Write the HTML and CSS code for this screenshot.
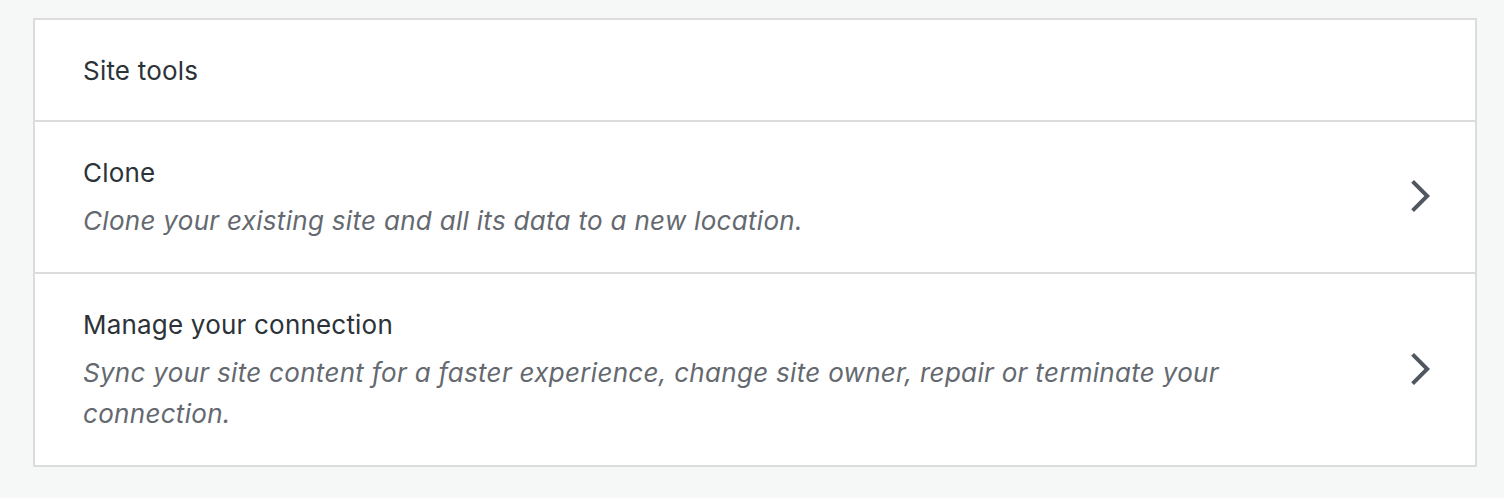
FILE: index.html
```html
<!DOCTYPE html>
<html lang="en">
<head>
<meta charset="utf-8">
<title>Site tools</title>
<link rel="stylesheet" href="styles.css">
</head>
<body>
<div class="page">
  <section class="card">
    <header class="card-header">Site tools</header>
    <a class="tool" href="#">
      <div class="tool-text">
        <div class="tool-title">Clone</div>
        <div class="tool-desc">Clone your existing site and all its data to a new location.</div>
      </div>
      <svg class="chevron" viewBox="0 0 24 24" width="48" height="48" aria-hidden="true"><path d="M10 20l8-8-8-8-1.414 1.414L15.172 12l-6.586 6.586z"/></svg>
    </a>
    <a class="tool" href="#">
      <div class="tool-text">
        <div class="tool-title">Manage your connection</div>
        <div class="tool-desc">Sync your site content for a faster experience, change site owner, repair or terminate your connection.</div>
      </div>
      <svg class="chevron" viewBox="0 0 24 24" width="48" height="48" aria-hidden="true"><path d="M10 20l8-8-8-8-1.414 1.414L15.172 12l-6.586 6.586z"/></svg>
    </a>
  </section>
</div>
</body>
</html>
```

FILE: styles.css
```css
html, body {
  margin: 0;
  padding: 0;
  background: #f6f7f7;
}
body {
  font-family: Inter, "Liberation Sans", sans-serif;
  color: #2c3338;
}
.page {
  padding: 18px 27px 0 33px;
}
.card {
  width: 1440px;
  background: #fff;
  border: 2px solid #dcdcde;
  border-radius: 1px;
}
.card-header {
  height: 100px;
  display: flex;
  align-items: center;
  padding: 0 48px;
  font-size: 26px;
  letter-spacing: 0.2px;
  color: #2c3338;
  border-bottom: 2px solid #dcdcde;
}
.tool {
  display: flex;
  align-items: center;
  padding: 29px 33px 31px 48px;
  text-decoration: none;
  color: inherit;
}
.tool + .tool {
  border-top: 2px solid #dcdcde;
}
.tool-text {
  flex: 1;
  min-width: 0;
  padding-right: 150px;
}
.tool-title {
  font-size: 26px;
  line-height: 44px;
  letter-spacing: 0.2px;
  margin-bottom: 5px;
  color: #2c3338;
}
.tool-desc {
  font-size: 26px;
  line-height: 41px;
  font-style: italic;
  color: #646970;
  letter-spacing: 0.3px;
}
.chevron {
  flex: none;
  fill: #50575e;
}
```
